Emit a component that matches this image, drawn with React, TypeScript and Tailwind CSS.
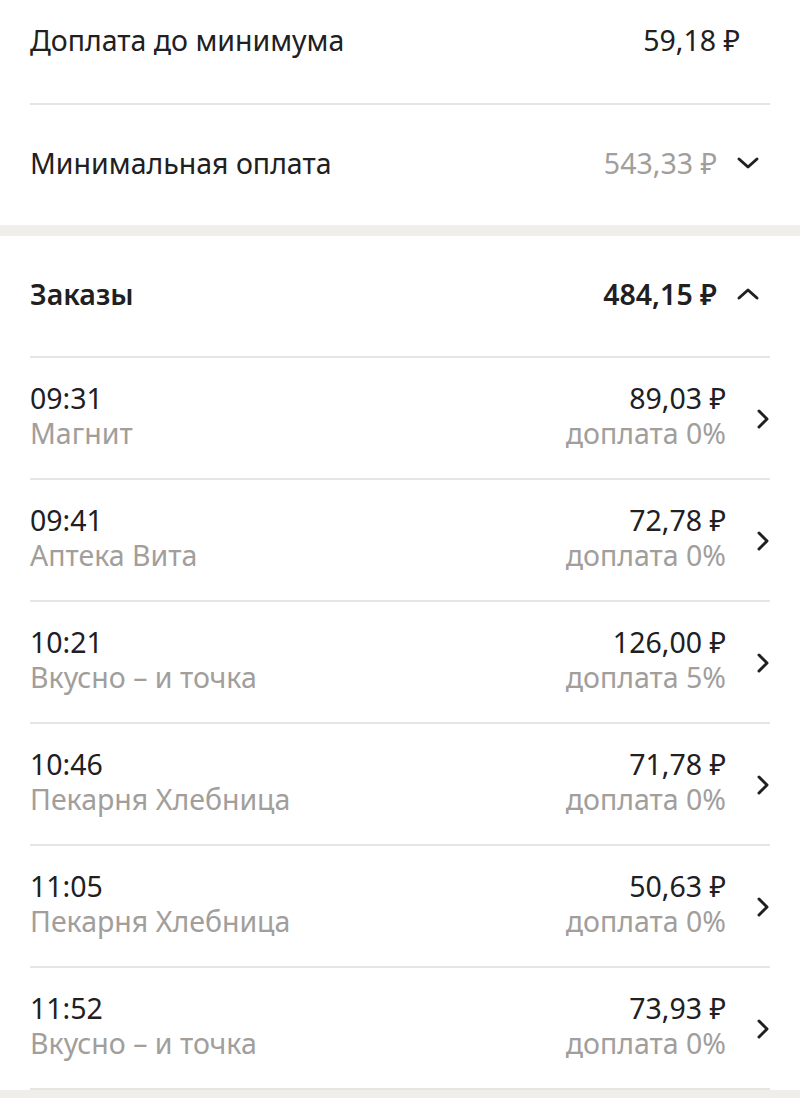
import React from "react";

const orders = [
  { t: "09:31", n: "Магнит", a: "89,03 ₽", p: "доплата 0%" },
  { t: "09:41", n: "Аптека Вита", a: "72,78 ₽", p: "доплата 0%" },
  { t: "10:21", n: "Вкусно – и точка", a: "126,00 ₽", p: "доплата 5%" },
  { t: "10:46", n: "Пекарня Хлебница", a: "71,78 ₽", p: "доплата 0%" },
  { t: "11:05", n: "Пекарня Хлебница", a: "50,63 ₽", p: "доплата 0%" },
  { t: "11:52", n: "Вкусно – и точка", a: "73,93 ₽", p: "доплата 0%" },
];

function Chevron({ dir }: { dir: "down" | "up" | "right" }) {
  if (dir === "right") {
    return (
      <svg width="14" height="22" viewBox="0 0 14 22" fill="none">
        <path d="M3 3 L11 11 L3 19" stroke="#21201f" strokeWidth="3" strokeLinecap="round" strokeLinejoin="round" />
      </svg>
    );
  }
  return (
    <svg width="24" height="14" viewBox="0 0 24 14" fill="none">
      <path
        d={dir === "down" ? "M3 3 L12 11 L21 3" : "M3 11 L12 3 L21 11"}
        stroke="#21201f"
        strokeWidth="3"
        strokeLinecap="round"
        strokeLinejoin="round"
      />
    </svg>
  );
}

export default function App() {
  return (
    <div
      className="w-[800px] h-[1098px] overflow-hidden bg-white text-[#21201f] text-[28.5px]"
      style={{ fontFamily: '"Noto Sans", sans-serif' }}
    >
      <div className="px-[30px]">
        <div className="flex items-center justify-between h-[103px] pb-[23px]">
          <span>Доплата до минимума</span>
          <span className="pr-[30px]">59,18 ₽</span>
        </div>
        <div className="h-[2px] bg-[#e6e5e3]" />
        <div className="flex items-center justify-between h-[120px] pb-[4px]">
          <span>Минимальная оплата</span>
          <div className="flex items-center gap-[19px] pr-[10px]">
            <span className="text-[#a19e9b]">543,33 ₽</span>
            <Chevron dir="down" />
          </div>
        </div>
      </div>
      <div className="h-[11px] bg-[#f0eeea]" />
      <div className="px-[30px]">
        <div className="flex items-center justify-between h-[120px] pb-[4px] font-semibold">
          <span>Заказы</span>
          <div className="flex items-center gap-[19px] pr-[10px]">
            <span>484,15 ₽</span>
            <Chevron dir="up" />
          </div>
        </div>
        {orders.map((o, i) => (
          <div key={i}>
            <div className="h-[2px] bg-[#e6e5e3]" />
            <div className="flex items-center justify-between h-[120px] pb-[4px]">
              <div className="flex flex-col leading-[35px]">
                <span>{o.t}</span>
                <span className="text-[#a19e9b]">{o.n}</span>
              </div>
              <div className="flex items-center gap-[30px]">
                <div className="flex flex-col items-end leading-[35px]">
                  <span>{o.a}</span>
                  <span className="text-[#a19e9b]">{o.p}</span>
                </div>
                <div className="pt-[6px]">
                  <Chevron dir="right" />
                </div>
              </div>
            </div>
          </div>
        ))}
        <div className="h-[2px] bg-[#e6e5e3]" />
      </div>
      <div className="h-[20px] bg-[#f0eeea]" />
    </div>
  );
}
